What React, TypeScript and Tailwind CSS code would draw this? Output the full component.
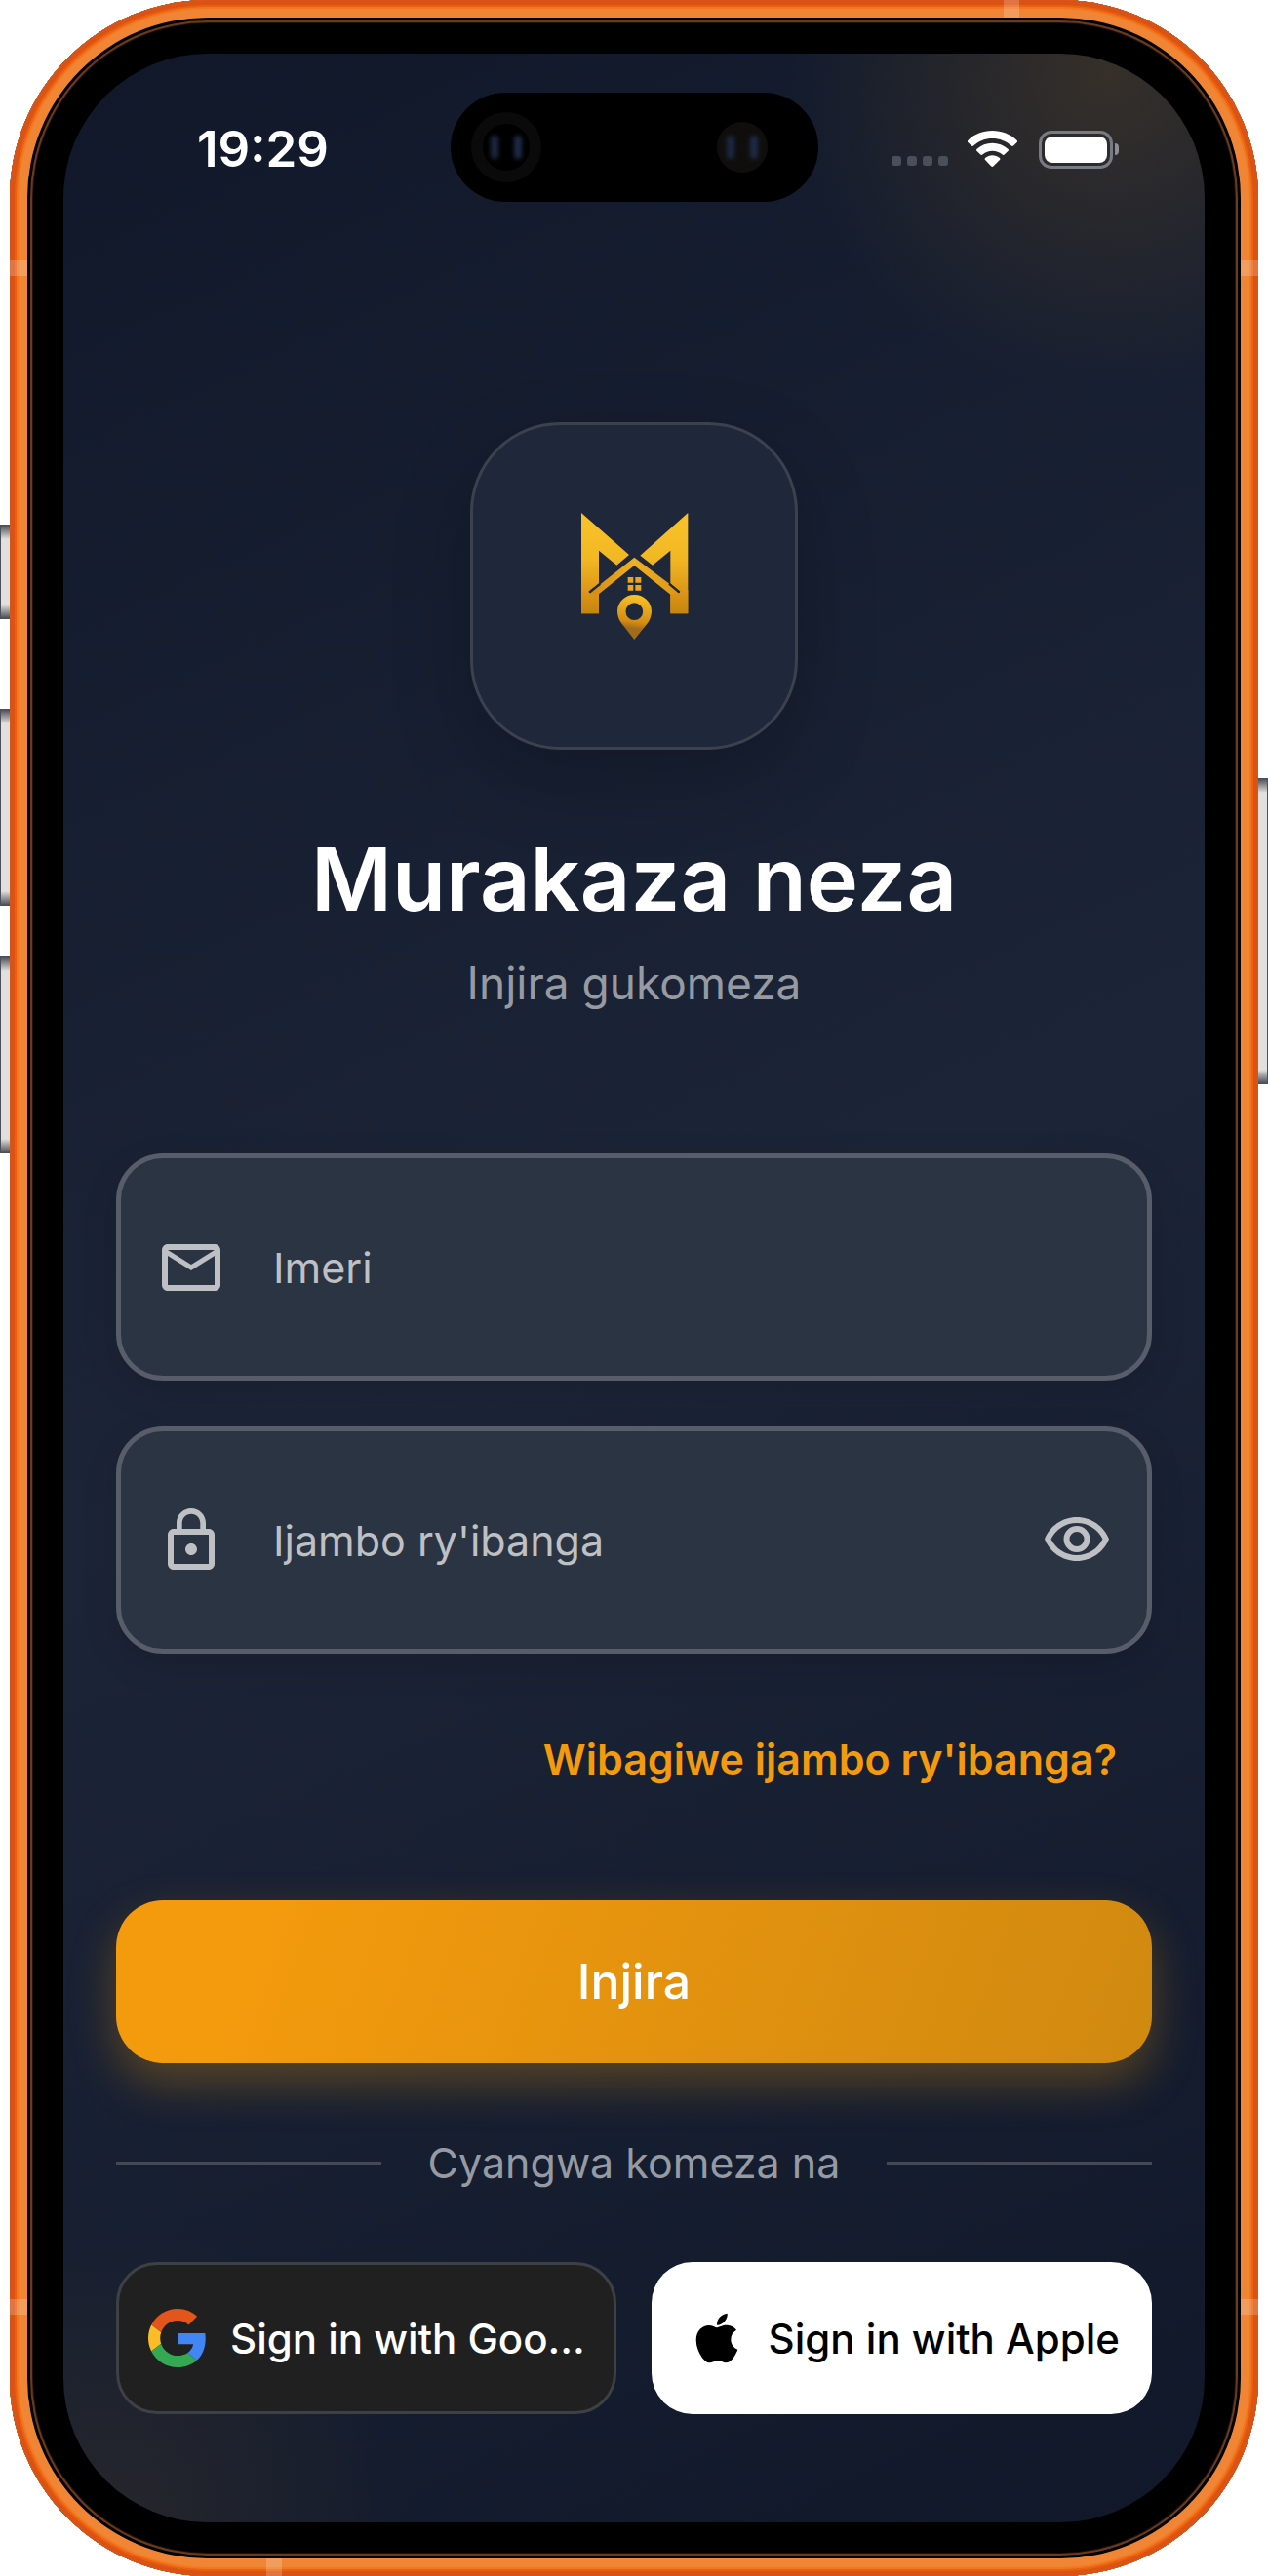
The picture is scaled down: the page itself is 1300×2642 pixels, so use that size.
import { useState } from "react";
import type { ReactNode } from "react";
import { FaApple } from "react-icons/fa";
import { MdMailOutline, MdLockOutline, MdOutlineVisibility, MdOutlineVisibilityOff } from "react-icons/md";

// volume, action and power keys that stick out of the frame
const sideKeys = [
  "left-0 top-[538px] h-[97px] border-l",
  "left-0 top-[727px] h-[202px] border-l",
  "left-0 top-[981px] h-[202px] border-l",
  "right-0 top-[798px] h-[314px] border-r",
];

// antenna bands on the metal edge
const antennaBands = [
  "left-0 top-[267px] h-4 w-[18px]",
  "right-0 top-[267px] h-4 w-[18px]",
  "left-0 bottom-[268px] h-4 w-[18px]",
  "right-0 bottom-[268px] h-4 w-[18px]",
  "right-[245px] top-0 h-[18px] w-4",
  "left-[263px] bottom-0 h-[18px] w-4",
];

function Lens({ className }: { className: string }) {
  return (
    <span className={`flex items-center justify-center gap-4 rounded-full ${className}`}>
      <span className="h-6 w-2 rounded-full bg-[#1b2740] blur-[2px]" />
      <span className="h-6 w-2 rounded-full bg-[#1d2a45] blur-[2px]" />
    </span>
  );
}

function StatusBar() {
  return (
    <header className="relative grid grid-cols-[1fr_377px_1fr] items-center pt-10 text-white">
      <time className="pt-1 pl-[137px] text-[51px] leading-[60px] font-semibold">19:29</time>
      <div className="flex h-28 items-center justify-between rounded-full bg-black pr-[52px] pl-[21px]">
        <Lens className="size-[72px] border-[12px] border-[#0b0a0a]" />
        <Lens className="size-[52px] bg-[#100e0d]" />
      </div>
      <div className="flex items-center justify-end pr-[88px]">
        <div className="mt-7 mr-5 flex gap-[6px]">
          {[0, 1, 2, 3].map((dot) => (
            <span key={dot} className="size-[10px] rounded-[3px] bg-[#4b4f5a]" />
          ))}
        </div>
        <svg className="mt-1 mr-[22px] h-[38px] w-[51px]" viewBox="0 0 153 114" fill="#fff" aria-hidden="true">
          <path d="M76 0C47 0 20 11 2 29c-3 3-3 5 0 8l9 9c3 3 5 3 8 0 15-14 35-22 57-22s43 8 58 22c3 3 5 3 8 0l9-9c3-3 3-5 0-8C132 11 105 0 76 0z" />
          <path d="M76 38c-18 0-34 6-47 18-3 3-3 5 0 7l10 10c3 3 5 2 8 0 8-7 18-11 29-11 12 0 22 4 30 11 3 2 5 3 8 0l10-10c3-2 3-4 0-7-13-12-30-18-48-18z" />
          <path d="M76 76c-8 0-15 3-21 7-3 3-3 5 0 8l17 18c3 3 5 3 8 0l18-18c3-3 3-5 0-8-6-4-14-7-22-7z" />
        </svg>
        <div className="mt-1 flex items-center gap-[2px]">
          <span className="h-[39px] w-[76px] rounded-[13px] border-[3px] border-[#777b84] p-[3px]">
            <span className="block h-full rounded-[8px] bg-white" />
          </span>
          <span className="h-3 w-1 rounded-r-full bg-[#8b8e95]" />
        </div>
      </div>
    </header>
  );
}

function Logo() {
  return (
    <div className="mx-auto flex size-[336px] items-center justify-center rounded-[92px] border-[3px] border-[#3b424d] bg-[#1f273a] shadow-[0_30px_80px_rgba(0,0,0,0.22)]">
      <svg className="h-[160px] w-[140px]" viewBox="0 33 420 480" role="img" aria-label="Logo">
        <defs>
          <linearGradient id="gold" x1="0" y1="48" x2="0" y2="358" gradientUnits="userSpaceOnUse">
            <stop offset="0" stopColor="#f9c22a" />
            <stop offset="0.45" stopColor="#f2b824" />
            <stop offset="0.8" stopColor="#dc9415" />
            <stop offset="1" stopColor="#c5860f" />
          </linearGradient>
          <linearGradient id="roof" x1="70" y1="0" x2="350" y2="0" gradientUnits="userSpaceOnUse">
            <stop offset="0" stopColor="#d28a10" />
            <stop offset="0.5" stopColor="#efb022" />
            <stop offset="1" stopColor="#dc9614" />
          </linearGradient>
          <linearGradient id="pin" x1="220" y1="300" x2="200" y2="438" gradientUnits="userSpaceOnUse">
            <stop offset="0" stopColor="#f9c22a" />
            <stop offset="0.6" stopColor="#d48d12" />
            <stop offset="0.75" stopColor="#a06c1a" />
            <stop offset="1" stopColor="#a06c1a" />
          </linearGradient>
        </defs>
        <path fill="url(#gold)" d="M48 48L195 177L157 209L102 164V265L70 291L74 295L102 277V358H48z" />
        <path fill="url(#gold)" d="M376 48L229 179L267 209L322 164V265L352 291L348 295L322 277V358H376z" />
        <path fill="url(#gold)" d="M48 285L76 295L102 300V358H48zM376 285L348 295L322 300V358H376z" />
        <path fill="url(#roof)" d="M211 185L352 291L322 299L211 210L100 299L72 295z" />
        <path fill="none" stroke="#1f273a" strokeWidth="7" strokeLinecap="round" d="M104 268L75 291M320 268L348 291" />
        <path fill="#eaa51d" d="M191 246h17v17h-17zM214 246h18v17h-18zM191 270h17v17h-17zM214 270h18v17h-18z" />
        <path
          fill="url(#pin)"
          fillRule="evenodd"
          d="M211 300c-29 0-52 23-52 51 0 12 4 25 12 36l40 51 41-51c8-11 12-24 12-36 0-28-23-51-53-51zm0 25a26 26 0 1 1 0 53 26 26 0 1 1 0-53z"
        />
      </svg>
    </div>
  );
}

function GoogleLogo() {
  return (
    <svg className="size-[60px] shrink-0" viewBox="0 0 48 48" aria-hidden="true">
      <path fill="#e2561b" d="M24 9.5c3.54 0 6.71 1.22 9.21 3.6l6.85-6.85C35.9 2.38 30.47 0 24 0 14.62 0 6.51 5.38 2.56 13.22l7.98 6.19C12.43 13.72 17.74 9.5 24 9.5z" />
      <path fill="#4285f4" d="M46.98 24.55c0-1.57-.15-3.09-.38-4.55H24v9.02h12.94c-.58 2.96-2.26 5.48-4.78 7.18l7.73 6c4.51-4.18 7.09-10.36 7.09-17.65z" />
      <path fill="#fbbc25" d="M10.53 28.59c-.48-1.45-.76-2.99-.76-4.59s.27-3.14.76-4.59l-7.98-6.19C.92 16.46 0 20.12 0 24c0 3.88.92 7.54 2.56 10.78l7.97-6.19z" />
      <path fill="#34a853" d="M24 48c6.48 0 11.93-2.13 15.89-5.81l-7.73-6c-2.15 1.45-4.92 2.3-8.16 2.3-6.26 0-11.57-4.22-13.47-9.91l-7.98 6.19C6.51 42.62 14.62 48 24 48z" />
    </svg>
  );
}

type FieldProps = {
  id: string;
  label: string;
  type: string;
  icon: ReactNode;
  children?: ReactNode;
};

function Field({ id, label, type, icon, children }: FieldProps) {
  return (
    <div className="flex h-[233px] items-center rounded-[48px] border-[5px] border-[#575d69] bg-[#2b3443] px-9 text-[#bec0c4] shadow-[0_12px_36px_rgba(0,0,0,0.12)]">
      <label htmlFor={id} className="mr-12 shrink-0" aria-label={label}>
        {icon}
      </label>
      <input
        id={id}
        type={type}
        placeholder={label}
        className="h-full min-w-0 flex-1 bg-transparent text-[43px] font-normal outline-none placeholder:text-[#bec0c4]"
      />
      {children}
    </div>
  );
}

function LoginForm() {
  const [showPassword, setShowPassword] = useState(false);

  return (
    <form className="relative px-[54px] pt-[145px] pb-[111px]" onSubmit={(e) => e.preventDefault()}>
      <div className="flex flex-col gap-[47px]">
        <Field id="email" label="Imeri" type="email" icon={<MdMailOutline size={72} />} />
        <Field
          id="password"
          label="Ijambo ry'ibanga"
          type={showPassword ? "text" : "password"}
          icon={<MdLockOutline size={72} />}
        >
          <button type="button" aria-label="Show password" onClick={() => setShowPassword(!showPassword)}>
            {showPassword ? <MdOutlineVisibilityOff size={72} /> : <MdOutlineVisibility size={72} />}
          </button>
        </Field>
      </div>

      <div className="mt-[78px] flex justify-end pr-9">
        <a href="#forgot" className="text-[43px] leading-[60px] font-semibold text-[#f39a0d]">
          Wibagiwe ijambo ry'ibanga?
        </a>
      </div>

      <button
        type="submit"
        className="mt-[115px] h-[167px] w-full rounded-[48px] bg-linear-[110deg,#f39a0d_15%,#d08910] text-[50px] font-medium text-white shadow-[0_20px_48px_rgba(245,158,11,0.3)]"
      >
        Injira
      </button>

      <div className="mt-[72px] flex items-center gap-12">
        <span className="h-[3px] flex-1 bg-[#434955]" />
        <span className="text-[43px] leading-[60px] text-[#969ba3]">Cyangwa komeza na</span>
        <span className="h-[3px] flex-1 bg-[#434955]" />
      </div>

      <div className="mt-[72px] grid grid-cols-2 gap-9 text-[42px] font-medium">
        <button
          type="button"
          aria-label="Sign in with Google"
          className="flex h-[156px] items-center gap-6 rounded-[42px] border-[3px] border-[#3d4044] bg-[#202020] px-[30px] whitespace-nowrap text-white"
        >
          <GoogleLogo />
          Sign in with Goo...
        </button>
        <button
          type="button"
          className="flex h-[156px] items-center justify-end gap-6 rounded-[42px] bg-white px-[33px] whitespace-nowrap text-black"
        >
          <FaApple size={58} />
          Sign in with Apple
        </button>
      </div>
    </form>
  );
}

function App() {
  return (
    <div className="relative w-full bg-white px-[10px] font-['Inter',sans-serif]">
      {sideKeys.map((key) => (
        <span
          key={key}
          className={`absolute w-[10px] border-y border-[#4a4f5a] bg-linear-[180deg,#4b5059,#e2e0df_14px,#e2e0df_calc(100%-14px),#4b5059] ${key}`}
        />
      ))}

      <div className="relative overflow-hidden rounded-[203px] bg-black p-[55px] shadow-[inset_0_0_0_5px_#d95316,inset_0_0_0_7px_#ee600d,inset_0_0_0_9px_#f0781f,inset_0_0_0_18px_#ef8535,inset_0_0_0_21px_#000,inset_0_0_0_23px_#6b3a22,inset_0_0_0_24px_#20120b]">
        {antennaBands.map((band) => (
          <span key={band} className={`absolute bg-white/20 ${band}`} />
        ))}

        <div className="relative overflow-hidden rounded-[148px] bg-linear-[155deg,#10182a,#1c2437_50%,#10182a]">
          <span className="absolute -top-[310px] -right-[230px] size-[660px] rounded-full bg-radial from-[#f59e0b]/15 to-transparent to-70%" />
          <span className="absolute -bottom-[310px] -left-[260px] size-[620px] rounded-full bg-radial from-[#f59e0b]/8 to-transparent to-70%" />

          <StatusBar />

          <main>
            <div className="relative pt-[226px] text-center">
              <Logo />
              <h1 className="mt-[77px] text-[90px] leading-[112px] font-semibold text-white">Murakaza neza</h1>
              <p className="mt-5 text-[46px] leading-[60px] text-[#969ba3]">Injira gukomeza</p>
            </div>
            <LoginForm />
          </main>
        </div>
      </div>
    </div>
  );
}

export default App;
